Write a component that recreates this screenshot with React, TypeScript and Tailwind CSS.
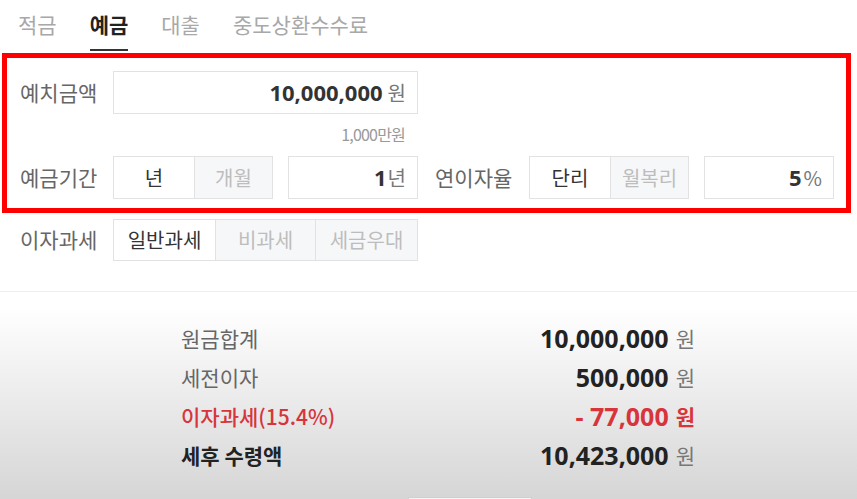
import React from "react";

const KR = { fontFamily: '"Noto Sans CJK KR", "Noto Sans", sans-serif' };

function Seg({ items, widths, active }: { items: string[]; widths: string[]; active: number }) {
  return (
    <div className="flex h-full">
      {items.map((t, i) => (
        <div
          key={t}
          className={
            "flex h-full items-center justify-center border border-[#e2e2e2] text-[20px] " +
            widths[i] +
            (i > 0 ? " -ml-px" : "") +
            (i === active ? " relative z-10 bg-white text-[#333]" : " bg-[#f6f7f8] text-[#bdbdbd]")
          }
        >
          {t}
        </div>
      ))}
    </div>
  );
}

function NumBox({ value, unit, width, gap }: { value: string; unit: string; width: string; gap: string }) {
  return (
    <div className={"flex h-full items-center justify-end border border-[#e2e2e2] bg-white pr-[11px] " + width}>
      <span className="font-['Open_Sans'] text-[22px] font-bold text-[#333]">{value}</span>
      <span className={"text-[20px] text-[#777] " + gap}>{unit}</span>
    </div>
  );
}

function ResultRow({
  label,
  value,
  tone,
}: {
  label: string;
  value: string;
  tone: "normal" | "red" | "bold";
}) {
  const labelCls =
    tone === "red" ? "font-medium text-[#d8343c]" : tone === "bold" ? "font-bold text-[#222]" : "text-[#666]";
  const valCls = tone === "red" ? "text-[#d8343c]" : "text-[#222]";
  const unitCls = tone === "red" ? "text-[#d8343c] font-bold" : "text-[#777]";
  return (
    <div className="flex h-[39px] w-[514px] items-center justify-between">
      <span className={"text-[21px] " + labelCls}>{label}</span>
      <span className="flex items-center">
        <span className={"font-['Open_Sans'] text-[25px] font-bold " + valCls}>{value}</span>
        <span className={"ml-[7px] text-[21px] " + unitCls}>원</span>
      </span>
    </div>
  );
}

export default function App() {
  return (
    <div className="relative h-[499px] w-[857px] overflow-hidden bg-white" style={KR}>
      {/* tabs */}
      <nav className="flex h-[53px] gap-[33px] pl-[18px]">
        {["적금", "예금", "대출", "중도상환수수료"].map((t) => (
          <div
            key={t}
            className={
              "flex h-[51px] items-center border-b-2 text-[21px] " +
              (t === "예금" ? "border-[#333] font-bold text-[#222]" : "border-transparent text-[#a8a8a8]")
            }
          >
            {t}
          </div>
        ))}
      </nav>

      {/* highlighted box */}
      <div className="ml-[2px] h-[160px] w-[849px] border-[5px] border-[#ff0000] pl-[13px] pt-[13px]">
        <div className="flex h-[43px] items-center">
          <div className="w-[93px] text-[21px] text-[#666]">예치금액</div>
          <NumBox value="10,000,000" unit="원" width="w-[305px]" gap="ml-[5px]" />
        </div>
        <div className="flex h-[42px] w-[398px] items-center justify-end pb-[2px] pr-[13px]">
          <span className="text-[16px] tracking-[-0.8px] text-[#999]">1,000만원</span>
        </div>
        <div className="flex h-[43px] items-center">
          <div className="w-[93px] text-[21px] text-[#666]">예금기간</div>
          <Seg items={["년", "개월"]} widths={["w-[82px]", "w-[79px]"]} active={0} />
          <div className="ml-[15px] h-full">
            <NumBox value="1" unit="년" width="w-[130px]" gap="ml-[1px]" />
          </div>
          <div className="ml-[17px] w-[94px] text-[21px] text-[#666]">연이자율</div>
          <Seg items={["단리", "월복리"]} widths={["w-[82px]", "w-[79px]"]} active={0} />
          <div className="ml-[15px] h-full">
            <NumBox value="5" unit="%" width="w-[130px]" gap="ml-[2px]" />
          </div>
        </div>
      </div>

      {/* 이자과세 */}
      <div className="mt-[6px] flex h-[42px] items-center pl-[20px]">
        <div className="w-[93px] text-[21px] text-[#666]">이자과세</div>
        <Seg
          items={["일반과세", "비과세", "세금우대"]}
          widths={["w-[103px]", "w-[101px]", "w-[103px]"]}
          active={0}
        />
      </div>

      {/* results */}
      <div className="mt-[30px] h-[300px] border-t border-[#eeeeee] bg-gradient-to-b from-white from-[5%] to-[#d2d2d2] to-[75%] pt-[27px]">
        <div className="ml-[181px]">
          <ResultRow label="원금합계" value="10,000,000" tone="normal" />
          <ResultRow label="세전이자" value="500,000" tone="normal" />
          <ResultRow label="이자과세(15.4%)" value="- 77,000" tone="red" />
          <ResultRow label="세후 수령액" value="10,423,000" tone="bold" />
        </div>
        <div className="ml-[408px] mt-[22px] h-[40px] w-[124px] border border-[#cfcfcf] bg-[#f4f4f4]" />
      </div>
    </div>
  );
}
